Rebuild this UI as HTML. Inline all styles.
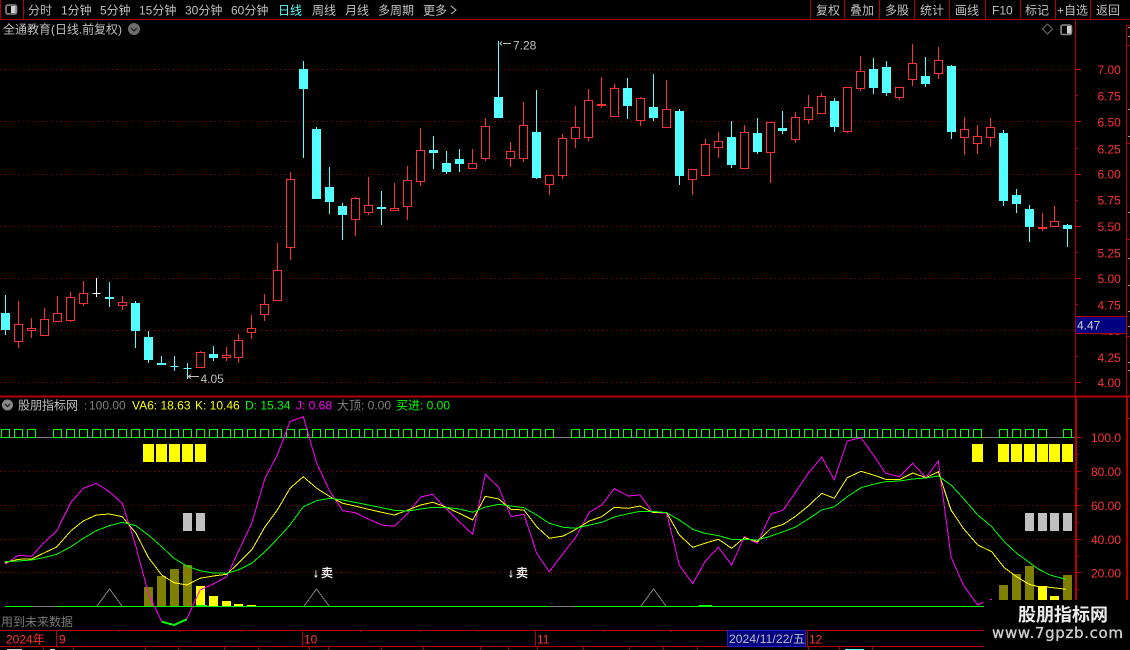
<!DOCTYPE html>
<html lang="zh">
<head>
<meta charset="utf-8">
<title>全通教育</title>
<style>
html,body{margin:0;padding:0;background:#000;width:1130px;height:650px;overflow:hidden}
svg{display:block}
text{font-family:"Liberation Sans","WenQuanYi Zen Hei","Noto Sans CJK SC",sans-serif;font-size:12px;fill:#c0c0c0;white-space:pre}
.r{fill:#ff3232}
.y{fill:#ffff00}
.g{fill:#00ff00}
.m{fill:#ff00ff}
.d{fill:#808080}
.w{fill:#fff;stroke:#fff;stroke-width:.3}
</style>
</head>
<body>
<svg width="1130" height="650" viewBox="0 0 1130 650" xmlns="http://www.w3.org/2000/svg">
<rect width="1130" height="650" fill="#000"/>

<!-- main grid -->
<g shape-rendering="crispEdges" stroke="#a80000" stroke-width="1" stroke-dasharray="1 3.67" fill="none">
<path d="M0 69.5H1075M0 121.5H1075M0 174.5H1075M0 226.5H1075M0 278.5H1075M0 330.5H1075M0 382.5H1075"/>
<path d="M0 471.5H1075M0 505.5H1075M0 539.5H1075M0 572.5H1075"/>
</g>

<!-- frame lines -->
<g shape-rendering="crispEdges" stroke="#b40000" fill="none">
<path d="M0 19.5H1130M0.5 0V19M23.5 0V19M810.5 0V19M844.5 0V19M879.5 0V19M914.5 0V19M949.5 0V19M985.5 0V19M1020.5 0V19M1055.5 0V19M1090.5 0V19"/>
<path d="M1126.5 25V396M1075.5 19V396"/>
<path d="M1127 397V650M1076 397V650" stroke-width="2"/>
<path d="M0 396.5H1130" stroke-width="2"/>
<path d="M0 630.5H1130M0 646.5H1130"/>
<path d="M56.5 630V646M302.5 630V646M535.5 630V646M807.5 630V646"/>
<path d="M118.5 630V632M179.5 630V632M241.5 630V632M360.5 630V632M419.5 630V632M477.5 630V632M603.5 630V632M671.5 630V632"/>
<path d="M43.5 646V650M73.5 646V650M145.5 646V650M178.5 646V650M224.5 646V650M258.5 646V650M309.5 646V650M328.5 646V650M381.5 646V650M423.5 646V650M480.5 646V650M508.5 646V650M537.5 646V650M583.5 646V650M629.5 646V650M663.5 646V650M697.5 646V650M808.5 646V650M839.5 646V650M872.5 646V650"/>
<!-- axis ticks -->
<path d="M1076 69.5H1081M1076 95.5H1078M1076 121.5H1081M1076 148.5H1078M1076 174.5H1081M1076 200.5H1078M1076 226.5H1081M1076 252.5H1078M1076 278.5H1081M1076 304.5H1078M1076 382.5H1081M1076 356.5H1078"/>
<path d="M1076 437.5H1081M1076 454.5H1079M1076 471.5H1081M1076 488.5H1079M1076 505.5H1081M1076 522.5H1079M1076 539.5H1081M1076 556.5H1079M1076 572.5H1081M1076 589.5H1079"/>
<path d="M1127 25.5H1130M1127 45.5H1130M1127 143.5H1130M1127 239.5H1130M1127 336.5H1130M1127 418.5H1130"/>
</g>
<path shape-rendering="crispEdges" stroke="#999" d="M1128 27.5H1130M1128 36.5H1130M1128 109.5H1130M1128 136.5H1130M1128 212.5H1130M1128 258.5H1130M1128 285.5H1130M1128 311.5H1130M1128 326.5H1130M1128 362.5H1130M1128 370.5H1130"/>

<!-- cyan candles -->
<path shape-rendering="crispEdges" fill="#54ffff" stroke="#54ffff" d="M5.5 295V335M1.5 313.5h8v16h-8zM109.5 282V307M105.5 297.5h8v1h-8zM135.5 301V348M131.5 303.5h8v27h-8zM148.5 331V363M144.5 337.5h8v22h-8zM161.5 356V365M157.5 363.5h8v1h-8zM174.5 356V371M170.5 366.5h8M187.5 363V379M183.5 368.5h8M213.5 346V361M209.5 354.5h8v3h-8zM303.5 61V158M299.5 69.5h8v19h-8zM316.5 127V199M312.5 129.5h8v69h-8zM329.5 167V214M325.5 187.5h8v14h-8zM342.5 203V240M338.5 206.5h8v8h-8zM381.5 191V225M377.5 207.5h8v1h-8zM433.5 136V169M429.5 150.5h8v2h-8zM446.5 151V174M442.5 163.5h8v8h-8zM459.5 149V172M455.5 159.5h8v4h-8zM498.5 41V118M494.5 97.5h8v20h-8zM536.5 90V179M532.5 132.5h8v45h-8zM627.5 78V119M623.5 88.5h8v17h-8zM653.5 74V121M649.5 107.5h8v10h-8zM679.5 109V185M675.5 111.5h8v64h-8zM731.5 121V168M727.5 137.5h8v27h-8zM757.5 118V154M753.5 133.5h8v18h-8zM782.5 111V134M778.5 128.5h8v2h-8zM834.5 98V132M830.5 101.5h8v25h-8zM873.5 58V94M869.5 69.5h8v18h-8zM886.5 61V96M882.5 67.5h8v25h-8zM925.5 57V87M921.5 76.5h8v7h-8zM951.5 65V139M947.5 66.5h8v65h-8zM1003.5 130V206M999.5 133.5h8v67h-8zM1016.5 189V213M1012.5 195.5h8v8h-8zM1029.5 205V242M1025.5 209.5h8v17h-8zM1067.5 224V247M1063.5 225.5h8v3h-8z"/>
<!-- red candles -->
<path shape-rendering="crispEdges" fill="#000" stroke="#ff3232" d="M18.5 301V324M18.5 342V348M14.5 324.5h8v17h-8zM31.5 318V328M31.5 331V338M27.5 328.5h8v2h-8zM44.5 308V319M40.5 319.5h8v16h-8zM57.5 296V313M53.5 313.5h8v8h-8zM70.5 292V297M70.5 321V322M66.5 297.5h8v23h-8zM83.5 281V293M83.5 304V306M79.5 293.5h8v10h-8zM122.5 296V302M122.5 306V310M118.5 302.5h8v3h-8zM200.5 351V352M196.5 352.5h8v15h-8zM226.5 347V355M226.5 358V361M222.5 355.5h8v2h-8zM238.5 334V340M238.5 358V363M234.5 340.5h8v17h-8zM251.5 315V328M251.5 333V339M247.5 328.5h8v4h-8zM264.5 294V304M264.5 315V321M260.5 304.5h8v10h-8zM277.5 243V270M273.5 270.5h8v30h-8zM290.5 172V179M290.5 248V260M286.5 179.5h8v68h-8zM355.5 197V198M355.5 220V236M351.5 198.5h8v21h-8zM368.5 177V205M368.5 213V215M364.5 205.5h8v7h-8zM394.5 183V208M390.5 208.5h8v2h-8zM407.5 166V180M407.5 207V220M403.5 180.5h8v26h-8zM420.5 128V150M420.5 182V186M416.5 150.5h8v31h-8zM472.5 149V163M468.5 163.5h8v5h-8zM485.5 118V126M485.5 159V161M481.5 126.5h8v32h-8zM510.5 142V151M510.5 159V167M506.5 151.5h8v7h-8zM523.5 102V125M523.5 159V162M519.5 125.5h8v33h-8zM549.5 185V195M545.5 175.5h8v9h-8zM562.5 134V138M562.5 175V179M558.5 138.5h8v37h-8zM575.5 106V127M575.5 138V148M571.5 127.5h8v11h-8zM588.5 89V100M588.5 137V141M584.5 100.5h8v37h-8zM601.5 77V108M597.5 104.5h8v1h-8zM614.5 84V88M610.5 88.5h8v28h-8zM640.5 97V98M640.5 120V126M636.5 98.5h8v22h-8zM666.5 80V109M662.5 109.5h8v18h-8zM692.5 179V195M688.5 169.5h8v10h-8zM705.5 139V144M701.5 144.5h8v31h-8zM718.5 132V141M718.5 147V158M714.5 141.5h8v6h-8zM744.5 125V132M740.5 132.5h8v36h-8zM770.5 152V183M766.5 122.5h8v30h-8zM795.5 112V117M795.5 139V143M791.5 117.5h8v22h-8zM808.5 95V107M808.5 119V124M804.5 107.5h8v12h-8zM821.5 93V96M817.5 96.5h8v17h-8zM847.5 132V133M843.5 87.5h8v44h-8zM860.5 56V71M860.5 89V91M856.5 71.5h8v17h-8zM899.5 97V100M895.5 87.5h8v10h-8zM912.5 44V63M912.5 80V86M908.5 63.5h8v16h-8zM938.5 47V60M938.5 73V79M934.5 60.5h8v13h-8zM964.5 117V129M964.5 137V155M960.5 129.5h8v8h-8zM977.5 125V136M977.5 143V154M973.5 136.5h8v7h-8zM990.5 118V127M990.5 137V147M986.5 127.5h8v10h-8zM1042.5 213V231M1038.5 227.5h8v1h-8zM1054.5 206V221M1050.5 221.5h8v5h-8z"/>
<path shape-rendering="crispEdges" fill="none" stroke="#fff" d="M96.5 278V297M92.5 293.5h8"/>

<!-- hi/lo annotations -->
<path fill="none" stroke="#c0c0c0" d="M502 41.5l-2 2 2 2M503 43.5h8"/>
<path fill="none" stroke="#c0c0c0" d="M188 376.5h11M188 376.5l3-2M188 376.5l3 2"/>
<text x="513" y="49.5">7.28</text>
<text x="200.5" y="383">4.05</text>

<!-- indicator: baseline line + squares -->
<path shape-rendering="crispEdges" stroke="#808080" d="M0 437.5H1075"/>
<path shape-rendering="crispEdges" fill="none" stroke="#00ff00" d="M1.5 429.5h8v8h-8zM14.5 429.5h8v8h-8zM27.5 429.5h8v8h-8zM53.5 429.5h8v8h-8zM66.5 429.5h8v8h-8zM79.5 429.5h8v8h-8zM92.5 429.5h8v8h-8zM105.5 429.5h8v8h-8zM118.5 429.5h8v8h-8zM131.5 429.5h8v8h-8zM144.5 429.5h8v8h-8zM157.5 429.5h8v8h-8zM170.5 429.5h8v8h-8zM183.5 429.5h8v8h-8zM196.5 429.5h8v8h-8zM209.5 429.5h8v8h-8zM222.5 429.5h8v8h-8zM234.5 429.5h8v8h-8zM247.5 429.5h8v8h-8zM260.5 429.5h8v8h-8zM273.5 429.5h8v8h-8zM286.5 429.5h8v8h-8zM299.5 429.5h8v8h-8zM312.5 429.5h8v8h-8zM325.5 429.5h8v8h-8zM338.5 429.5h8v8h-8zM351.5 429.5h8v8h-8zM364.5 429.5h8v8h-8zM377.5 429.5h8v8h-8zM390.5 429.5h8v8h-8zM403.5 429.5h8v8h-8zM416.5 429.5h8v8h-8zM429.5 429.5h8v8h-8zM442.5 429.5h8v8h-8zM455.5 429.5h8v8h-8zM468.5 429.5h8v8h-8zM481.5 429.5h8v8h-8zM494.5 429.5h8v8h-8zM506.5 429.5h8v8h-8zM519.5 429.5h8v8h-8zM532.5 429.5h8v8h-8zM545.5 429.5h8v8h-8zM571.5 429.5h8v8h-8zM584.5 429.5h8v8h-8zM597.5 429.5h8v8h-8zM610.5 429.5h8v8h-8zM623.5 429.5h8v8h-8zM636.5 429.5h8v8h-8zM649.5 429.5h8v8h-8zM662.5 429.5h8v8h-8zM675.5 429.5h8v8h-8zM688.5 429.5h8v8h-8zM701.5 429.5h8v8h-8zM714.5 429.5h8v8h-8zM727.5 429.5h8v8h-8zM740.5 429.5h8v8h-8zM753.5 429.5h8v8h-8zM766.5 429.5h8v8h-8zM778.5 429.5h8v8h-8zM791.5 429.5h8v8h-8zM804.5 429.5h8v8h-8zM817.5 429.5h8v8h-8zM830.5 429.5h8v8h-8zM843.5 429.5h8v8h-8zM856.5 429.5h8v8h-8zM869.5 429.5h8v8h-8zM882.5 429.5h8v8h-8zM895.5 429.5h8v8h-8zM908.5 429.5h8v8h-8zM921.5 429.5h8v8h-8zM934.5 429.5h8v8h-8zM947.5 429.5h8v8h-8zM960.5 429.5h8v8h-8zM973.5 429.5h8v8h-8zM999.5 429.5h8v8h-8zM1012.5 429.5h8v8h-8zM1025.5 429.5h8v8h-8zM1038.5 429.5h8v8h-8zM1063.5 429.5h8v8h-8z"/>

<!-- yellow rects -->
<path shape-rendering="crispEdges" fill="#ffff00" d="M143 444h11v18h-11zM156 444h11v18h-11zM169 444h11v18h-11zM182 444h11v18h-11zM195 444h11v18h-11zM972 444h11v18h-11zM998 444h11v18h-11zM1011 444h11v18h-11zM1024 444h11v18h-11zM1037 444h11v18h-11zM1049 444h11v18h-11zM1062 444h11v18h-11z"/>
<!-- gray rects -->
<path shape-rendering="crispEdges" fill="#c0c0c0" d="M183 513h9v18h-9zM196 513h9v18h-9zM1025 513h9v18h-9zM1038 513h9v18h-9zM1050 513h9v18h-9zM1063 513h9v18h-9z"/>
<!-- histogram bars -->
<path shape-rendering="crispEdges" fill="#808000" d="M144 587h9v19h-9zM157 576h9v30h-9zM170 569h9v37h-9zM183 565h9v41h-9zM999 585h9v21h-9zM1012 574h9v32h-9zM1025 566h9v40h-9zM1063 575h9v31h-9z"/>
<path shape-rendering="crispEdges" fill="#ffff00" d="M196 586h9v20h-9zM209 596h9v10h-9zM222 601h9v5h-9zM234 604h9v2h-9zM247 605h9v1h-9zM1038 586h9v20h-9zM1050 596h9v10h-9z"/>

<!-- triangles -->
<path fill="none" stroke="#808080" shape-rendering="crispEdges" d="M97 606L109.5 589L122 606M304 606L316.5 589L329 606M641 606L653.5 589L666 606"/>

<!-- baseline -->
<path shape-rendering="crispEdges" stroke="#00ff00" d="M5 606.5H984M196 605.5H207M699 605.5H712"/>
<path shape-rendering="crispEdges" stroke="#808080" d="M32 606.5H57M549 606.5H575"/>

<!-- lines -->
<g fill="none" shape-rendering="crispEdges" stroke-width="1">
<polyline stroke="#ff00ff" points="5,564.3 18.3,555.3 31.7,556.3 43.3,543.3 56.7,531 71,502.3 83.3,488.3 96.3,483.3 109.3,491.7 122.3,503.3 136,546.7 148.3,593.3 161.7,621.7 174,625 186.7,619.3 200,590 213.3,584 226.7,576.7 238.3,551.7 251.7,523.3 265,478.3 277.3,455 290,421.7 303.3,416.7 316.7,463.3 330,491.7 342.7,510.7 355,512.7 368.3,519 381.7,525 394.3,526.3 408,513 420.7,497 432.7,494.3 445,507.7 459.3,521.7 472.7,534.3 485.3,474.3 498.7,487.3 511,516.7 524,514.3 536.7,553.3 549.3,571.7 563.3,553.3 576,536.7 589.3,512.3 601.7,505 614.3,488.7 628.3,496 640,495 652.7,512.3 666.7,513.3 679.3,565 692.7,583.7 705,561.7 718.3,547.3 731.7,565 744.3,536.7 757.3,543.3 771,514 783.3,510 795,493 808.3,473.3 821.7,457 834.3,480 847.3,441 861,437.7 873.3,455 885.7,473.3 899.3,476.7 912.7,463.3 926,477.7 938.3,461 951,556.7 963.3,585 977.7,605 983.3,602.3"/>
<polyline stroke="#ffff00" points="5,562.7 18.3,559.3 31.7,559 43.3,553.3 56.7,547 71,530.7 83.3,521 96.3,515 109.3,514 122.3,516.7 136,533.3 148.3,557.3 161.7,575 174,582.7 186.7,585 200,578.3 213.3,576 226.7,574.3 238.3,563.3 251.7,550 265,526.7 277.3,510 290,488.3 303.3,476.7 316.7,488.3 330,496.7 342.7,503.3 355,506 368.3,509.3 381.7,512.3 394.3,515 408,510 420.7,505 432.7,502.3 445,506.7 459.3,513.3 472.7,520 485.3,496.3 498.7,499 511,509.3 524,510 536.7,526.7 549.3,538.3 563.3,536 576,529.3 589.3,521 601.7,516.7 614.3,507.3 628.3,508.3 640,506 652.7,512.3 666.7,512.7 679.3,535 692.7,547.3 705,543.3 718.3,539.3 731.7,548.3 744.3,537.7 757.3,541.7 771,528.3 783.3,524.3 795,516.7 808.3,506 821.7,493.3 834.3,498.3 847.3,477.7 861,471.3 873.3,475 885.7,479.3 899.3,479.7 912.7,473 926,477.7 938.3,471.7 951,510 963.3,528.3 977.7,545 991.7,551.7 1004.3,567.7 1016.7,576.7 1028.3,584 1038.3,586.7 1050,587.3 1066,589.3"/>
<polyline stroke="#00ff00" points="5,561.7 18.3,561 31.7,560 43.3,557.7 56.7,554.3 71,546.7 83.3,538.3 96.3,530.7 109.3,525.7 122.3,522.3 136,525.7 148.3,535 161.7,546.7 174,558.3 186.7,566 200,570.7 213.3,573 226.7,573.3 238.3,570 251.7,563.3 265,551.7 277.3,539 290,525 303.3,506.7 316.7,500.7 330,498.3 342.7,500 355,502.3 368.3,505 381.7,507.7 394.3,510.3 408,511 420.7,509 432.7,507.3 445,507.3 459.3,509 472.7,512.3 485.3,507 498.7,504.3 511,506 524,507.7 536.7,515 549.3,523.3 563.3,527.3 576,528.3 589.3,525 601.7,522.3 614.3,517 628.3,513.7 640,511.3 652.7,511.3 666.7,512.7 679.3,520 692.7,529.3 705,533.3 718.3,535.7 731.7,539.3 744.3,539.3 757.3,540 771,536 783.3,531.7 795,527.3 808.3,519 821.7,510 834.3,506.7 847.3,496.7 861,487.7 873.3,484.3 885.7,481.7 899.3,481 912.7,479 926,478 938.3,476 951,485 963.3,498.3 977.7,515 991.7,526.7 1004.3,541.7 1016.7,553.3 1028.3,561.7 1038.3,569 1050,575 1066,579.3"/>
<polyline stroke="#00ff00" stroke-width="2" points="161.7,621.7 174,625 186.7,619.3"/>
</g>
<rect x="990" y="599" width="2" height="1" fill="#ff00ff"/>

<!-- top-left icon -->
<rect x="6" y="5" width="10.5" height="9" rx="2" fill="none" stroke="#8c8c8c" stroke-width="1.6"/>
<rect x="11" y="6" width="4.5" height="7" fill="#d0d0d0"/>

<!-- toolbar -->
<text x="28" y="14.5">分时</text>
<text x="61" y="14.5">1分钟</text>
<text x="100" y="14.5">5分钟</text>
<text x="139" y="14.5">15分钟</text>
<text x="185" y="14.5">30分钟</text>
<text x="231" y="14.5">60分钟</text>
<text x="278" y="14.5" style="fill:#54ffff">日线</text>
<text x="312" y="14.5">周线</text>
<text x="345" y="14.5">月线</text>
<text x="378" y="14.5">多周期</text>
<text x="423" y="14.5">更多</text>
<path d="M451 6l5 4-5 4" fill="none" stroke="#c0c0c0"/>
<text x="816" y="14.5">复权</text>
<text x="850" y="14.5">叠加</text>
<text x="885" y="14.5">多股</text>
<text x="920" y="14.5">统计</text>
<text x="955" y="14.5">画线</text>
<text x="992" y="14.5">F10</text>
<text x="1025" y="14.5">标记</text>
<text x="1057" y="14.5">+自选</text>
<text x="1096" y="14.5">返回</text>

<!-- title -->
<text x="3" y="33.5" textLength="119">全通教育(日线.前复权)</text>
<circle cx="134" cy="29" r="6" fill="#6e6e6e"/>
<path d="M131 28l3 3 3-3" fill="none" stroke="#222" stroke-width="1.3"/>
<path d="M1047.5 24l5 5-5 5-5-5z" fill="none" stroke="#6e6e6e"/>
<rect x="1061" y="25" width="10.5" height="9.5" rx="2" fill="none" stroke="#8c8c8c" stroke-width="1.6"/>
<rect x="1067" y="26" width="4" height="7.5" fill="#d0d0d0"/>

<!-- price axis -->
<g class="axis">
<text class="r" x="1097.5" y="74">7.00</text>
<text class="r" x="1097.5" y="100.5">6.75</text>
<text class="r" x="1097.5" y="126.5">6.50</text>
<text class="r" x="1097.5" y="153.5">6.25</text>
<text class="r" x="1097.5" y="178.5">6.00</text>
<text class="r" x="1097.5" y="204.5">5.75</text>
<text class="r" x="1097.5" y="231">5.50</text>
<text class="r" x="1097.5" y="257.5">5.25</text>
<text class="r" x="1097.5" y="283">5.00</text>
<text class="r" x="1097.5" y="309.5">4.75</text>
<text class="r" x="1097.5" y="335">4.50</text>
<text class="r" x="1097.5" y="362">4.25</text>
<text class="r" x="1097.5" y="387">4.00</text>
<text class="r" x="1091" y="442">100.0</text>
<text class="r" x="1091" y="476">80.00</text>
<text class="r" x="1091" y="510">60.00</text>
<text class="r" x="1091" y="544">40.00</text>
<text class="r" x="1091" y="577.5">20.00</text>
</g>
<rect x="1075.5" y="316.5" width="51" height="17" fill="#000080" stroke="#b40000" shape-rendering="crispEdges"/>
<text x="1077" y="329.5" style="fill:#d0d0d0">4.47</text>

<!-- indicator header -->
<circle cx="7.5" cy="405" r="5.5" fill="#888"/>
<path d="M5 404l2.5 2.5L10 404" fill="none" stroke="#222" stroke-width="1.3"/>
<text x="18" y="409.5">股朋指标网</text>
<text class="d" y="409.5"><tspan x="84">:</tspan><tspan x="89">100.00</tspan></text>
<text class="y" x="132" y="409.5">VA6: 18.63</text>
<text class="y" x="195" y="409.5">K: 10.46</text>
<text class="g" x="245" y="409.5">D: 15.34</text>
<text class="m" x="296" y="409.5">J: 0.68</text>
<text class="d" x="337" y="409.5">大顶: 0.00</text>
<text class="g" x="396" y="409.5">买进: 0.00</text>

<text class="w" y="577"><tspan x="313">↓</tspan><tspan x="321">卖</tspan></text>
<text class="w" y="577"><tspan x="508">↓</tspan><tspan x="516">卖</tspan></text>

<text x="1" y="626" style="fill:#787878">用到未来数据</text>

<!-- time axis -->
<text class="r" x="6" y="643.5">2024年</text>
<text class="r" x="59" y="643.5">9</text>
<text class="r" x="304" y="643.5">10</text>
<text class="r" x="537" y="643.5">11</text>
<text class="r" x="809" y="643.5">12</text>
<rect x="727.5" y="630.5" width="78" height="16" fill="#000080" stroke="#2020c0" shape-rendering="crispEdges"/>
<text x="729" y="643" textLength="76">2024/11/22/五</text>
<path shape-rendering="crispEdges" stroke="#54ffff" d="M845 649.5H864"/>
<path shape-rendering="crispEdges" stroke="#ccc" d="M7 649.5H22M50 649.5H55"/>

<!-- watermark -->
<rect x="984" y="600" width="146" height="50" fill="#000"/>
<text x="1018" y="621" style="font-size:18px;font-weight:bold;fill:#ececec;font-family:'Noto Sans CJK SC','WenQuanYi Zen Hei',sans-serif">股朋指标网</text>
<text x="992" y="638" textLength="131" style="font-size:15px;fill:#cfcfcf;stroke:#cfcfcf;stroke-width:.35;font-family:'DejaVu Sans',sans-serif">www.7gpzb.com</text>
</svg>
</body>
</html>
